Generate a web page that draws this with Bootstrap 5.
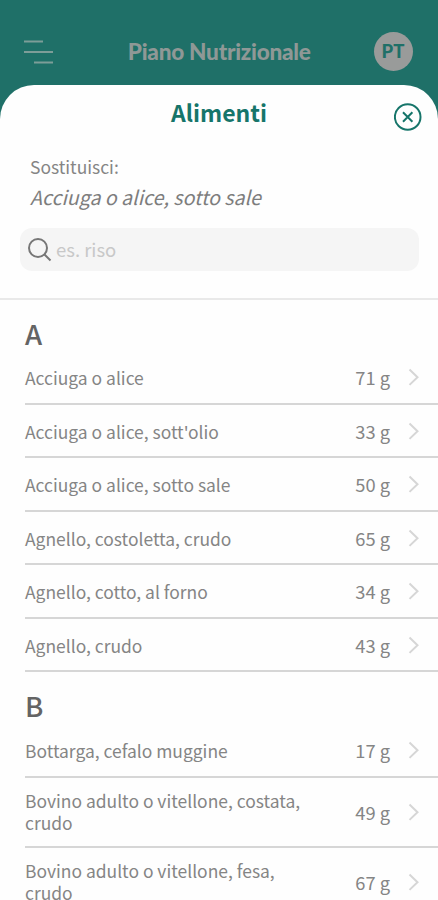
<!DOCTYPE html>
<html lang="it">
<head>
<meta charset="utf-8">
<meta name="viewport" content="width=device-width, initial-scale=1">
<title>Alimenti</title>
<link href="https://cdn.jsdelivr.net/npm/bootstrap@5.3.0/dist/css/bootstrap.min.css" rel="stylesheet">
<style>
body{background:#1f7068;color:#858585;font-family:"Noto Sans CJK JP","Noto Sans",sans-serif;font-size:17.45px;line-height:22px;height:900px}
.topbar{height:85px;padding:18px 25.5px 0 24px}
.topbar h1{font:900 22.6px/26px Lato,sans-serif;color:#8f9896;letter-spacing:-.25px;margin-left:11px}
.avatar{width:39px;height:39px;background:#999b9a;color:#1f7068;font:900 18.5px/39px Lato,sans-serif}
.sheet{height:815px;border-radius:34px 34px 0 0;background:#fefefe}
.sheet-top{height:60px;padding:0 16px}
.sheet-top h2{font-size:23px;line-height:30px;color:#16756a;margin-top:12px}
.close-btn{width:28px;height:28px;margin-top:18px;color:#16756a}
.swap{height:83px;padding:11px 30px 0}
.swap em{font-size:19.6px;line-height:30px;color:#7d7d7d;margin-top:4px}
.search{height:43px;margin:0 19px 26.5px 20px;border-radius:12px;background:#f5f5f5;padding-left:8px}
.search input,.search input:focus{font-size:18.5px;color:#777;background:transparent;box-shadow:none}
.search input::placeholder{color:#c8c8c8;opacity:1}
.foods{border-top:2px solid #e9e9e9}
.foods section{padding-left:25px}
.letter{height:51.8px;font-size:27.5px;line-height:67px;color:#646464;font-weight:500}
.food{height:53.5px;border-bottom:2px solid #d6d6d6;padding-right:16px}
.food.tall{height:70px}
.food-name{width:285px;padding-top:2px}
.tall .food-name{padding-top:1px}
.food-qty{font-size:18.3px}
.food svg{margin-left:17px}
</style>
<script src="https://cdn.jsdelivr.net/npm/bootstrap@5.3.0/dist/js/bootstrap.bundle.min.js"></script>
</head>
<body class="overflow-hidden">
<header class="topbar d-flex justify-content-between align-items-center pb-0">
  <svg width="30" height="26" viewBox="0 0 30 26" fill="none" stroke="#7d9d98" stroke-width="2"><path d="M0 2.500h19M0 13h29M10 23.500h19"/></svg>
  <h1 class="mb-0">Piano Nutrizionale</h1>
  <div class="avatar rounded-circle text-center">PT</div>
</header>
<main class="sheet overflow-hidden">
  <div class="sheet-top d-flex justify-content-between align-items-start">
    <span class="close-btn"></span>
    <h2 class="fw-bold mb-0">Alimenti</h2>
    <button class="close-btn btn p-0 border-0 d-flex" aria-label="Chiudi"><svg width="28" height="28" viewBox="0 0 28 28" fill="none" stroke="currentColor" stroke-width="2"><circle cx="13.700" cy="14" r="12.800"/><path d="M9 9.300l9.400 9.400m0-9.400l-9.400 9.400"/></svg></button>
  </div>
  <div class="swap d-flex flex-column"><span>Sostituisci:</span><em>Acciuga o alice, sotto sale</em></div>
  <div class="search d-flex align-items-center">
    <svg class="flex-shrink-0" width="24" height="24" viewBox="0 0 24 24" fill="none" stroke="#777" stroke-width="2"><circle cx="10" cy="10" r="9"/><path d="M16.500 16.500l6 6"/></svg>
    <input class="form-control border-0 p-0 ms-1" type="text" placeholder="es. riso" aria-label="Cerca">
  </div>
  <div class="foods">
    <section>
      <h3 class="letter mb-0">A</h3>
      <div class="food d-flex align-items-center"><span class="food-name">Acciuga o alice</span><span class="food-qty ms-auto">71 g</span><svg width="15" height="18" viewBox="0 0 15 18" fill="none" stroke="#d6d6d6" stroke-width="2"><path d="M2.500 1.500l8 7.700-8 7.700"/></svg></div>
      <div class="food d-flex align-items-center"><span class="food-name">Acciuga o alice, sott'olio</span><span class="food-qty ms-auto">33 g</span><svg width="15" height="18" viewBox="0 0 15 18" fill="none" stroke="#d6d6d6" stroke-width="2"><path d="M2.500 1.500l8 7.700-8 7.700"/></svg></div>
      <div class="food d-flex align-items-center"><span class="food-name">Acciuga o alice, sotto sale</span><span class="food-qty ms-auto">50 g</span><svg width="15" height="18" viewBox="0 0 15 18" fill="none" stroke="#d6d6d6" stroke-width="2"><path d="M2.500 1.500l8 7.700-8 7.700"/></svg></div>
      <div class="food d-flex align-items-center"><span class="food-name">Agnello, costoletta, crudo</span><span class="food-qty ms-auto">65 g</span><svg width="15" height="18" viewBox="0 0 15 18" fill="none" stroke="#d6d6d6" stroke-width="2"><path d="M2.500 1.500l8 7.700-8 7.700"/></svg></div>
      <div class="food d-flex align-items-center"><span class="food-name">Agnello, cotto, al forno</span><span class="food-qty ms-auto">34 g</span><svg width="15" height="18" viewBox="0 0 15 18" fill="none" stroke="#d6d6d6" stroke-width="2"><path d="M2.500 1.500l8 7.700-8 7.700"/></svg></div>
      <div class="food d-flex align-items-center"><span class="food-name">Agnello, crudo</span><span class="food-qty ms-auto">43 g</span><svg width="15" height="18" viewBox="0 0 15 18" fill="none" stroke="#d6d6d6" stroke-width="2"><path d="M2.500 1.500l8 7.700-8 7.700"/></svg></div>
    </section>
    <section>
      <h3 class="letter mb-0">B</h3>
      <div class="food d-flex align-items-center"><span class="food-name">Bottarga, cefalo muggine</span><span class="food-qty ms-auto">17 g</span><svg width="15" height="18" viewBox="0 0 15 18" fill="none" stroke="#d6d6d6" stroke-width="2"><path d="M2.500 1.500l8 7.700-8 7.700"/></svg></div>
      <div class="food tall d-flex align-items-center"><span class="food-name">Bovino adulto o vitellone, costata, crudo</span><span class="food-qty ms-auto">49 g</span><svg width="15" height="18" viewBox="0 0 15 18" fill="none" stroke="#d6d6d6" stroke-width="2"><path d="M2.500 1.500l8 7.700-8 7.700"/></svg></div>
      <div class="food tall d-flex align-items-center"><span class="food-name pt-0">Bovino adulto o vitellone, fesa,<br>crudo</span><span class="food-qty ms-auto">67 g</span><svg width="15" height="18" viewBox="0 0 15 18" fill="none" stroke="#d6d6d6" stroke-width="2"><path d="M2.500 1.500l8 7.700-8 7.700"/></svg></div>
    </section>
  </div>
</main>
</body>
</html>
